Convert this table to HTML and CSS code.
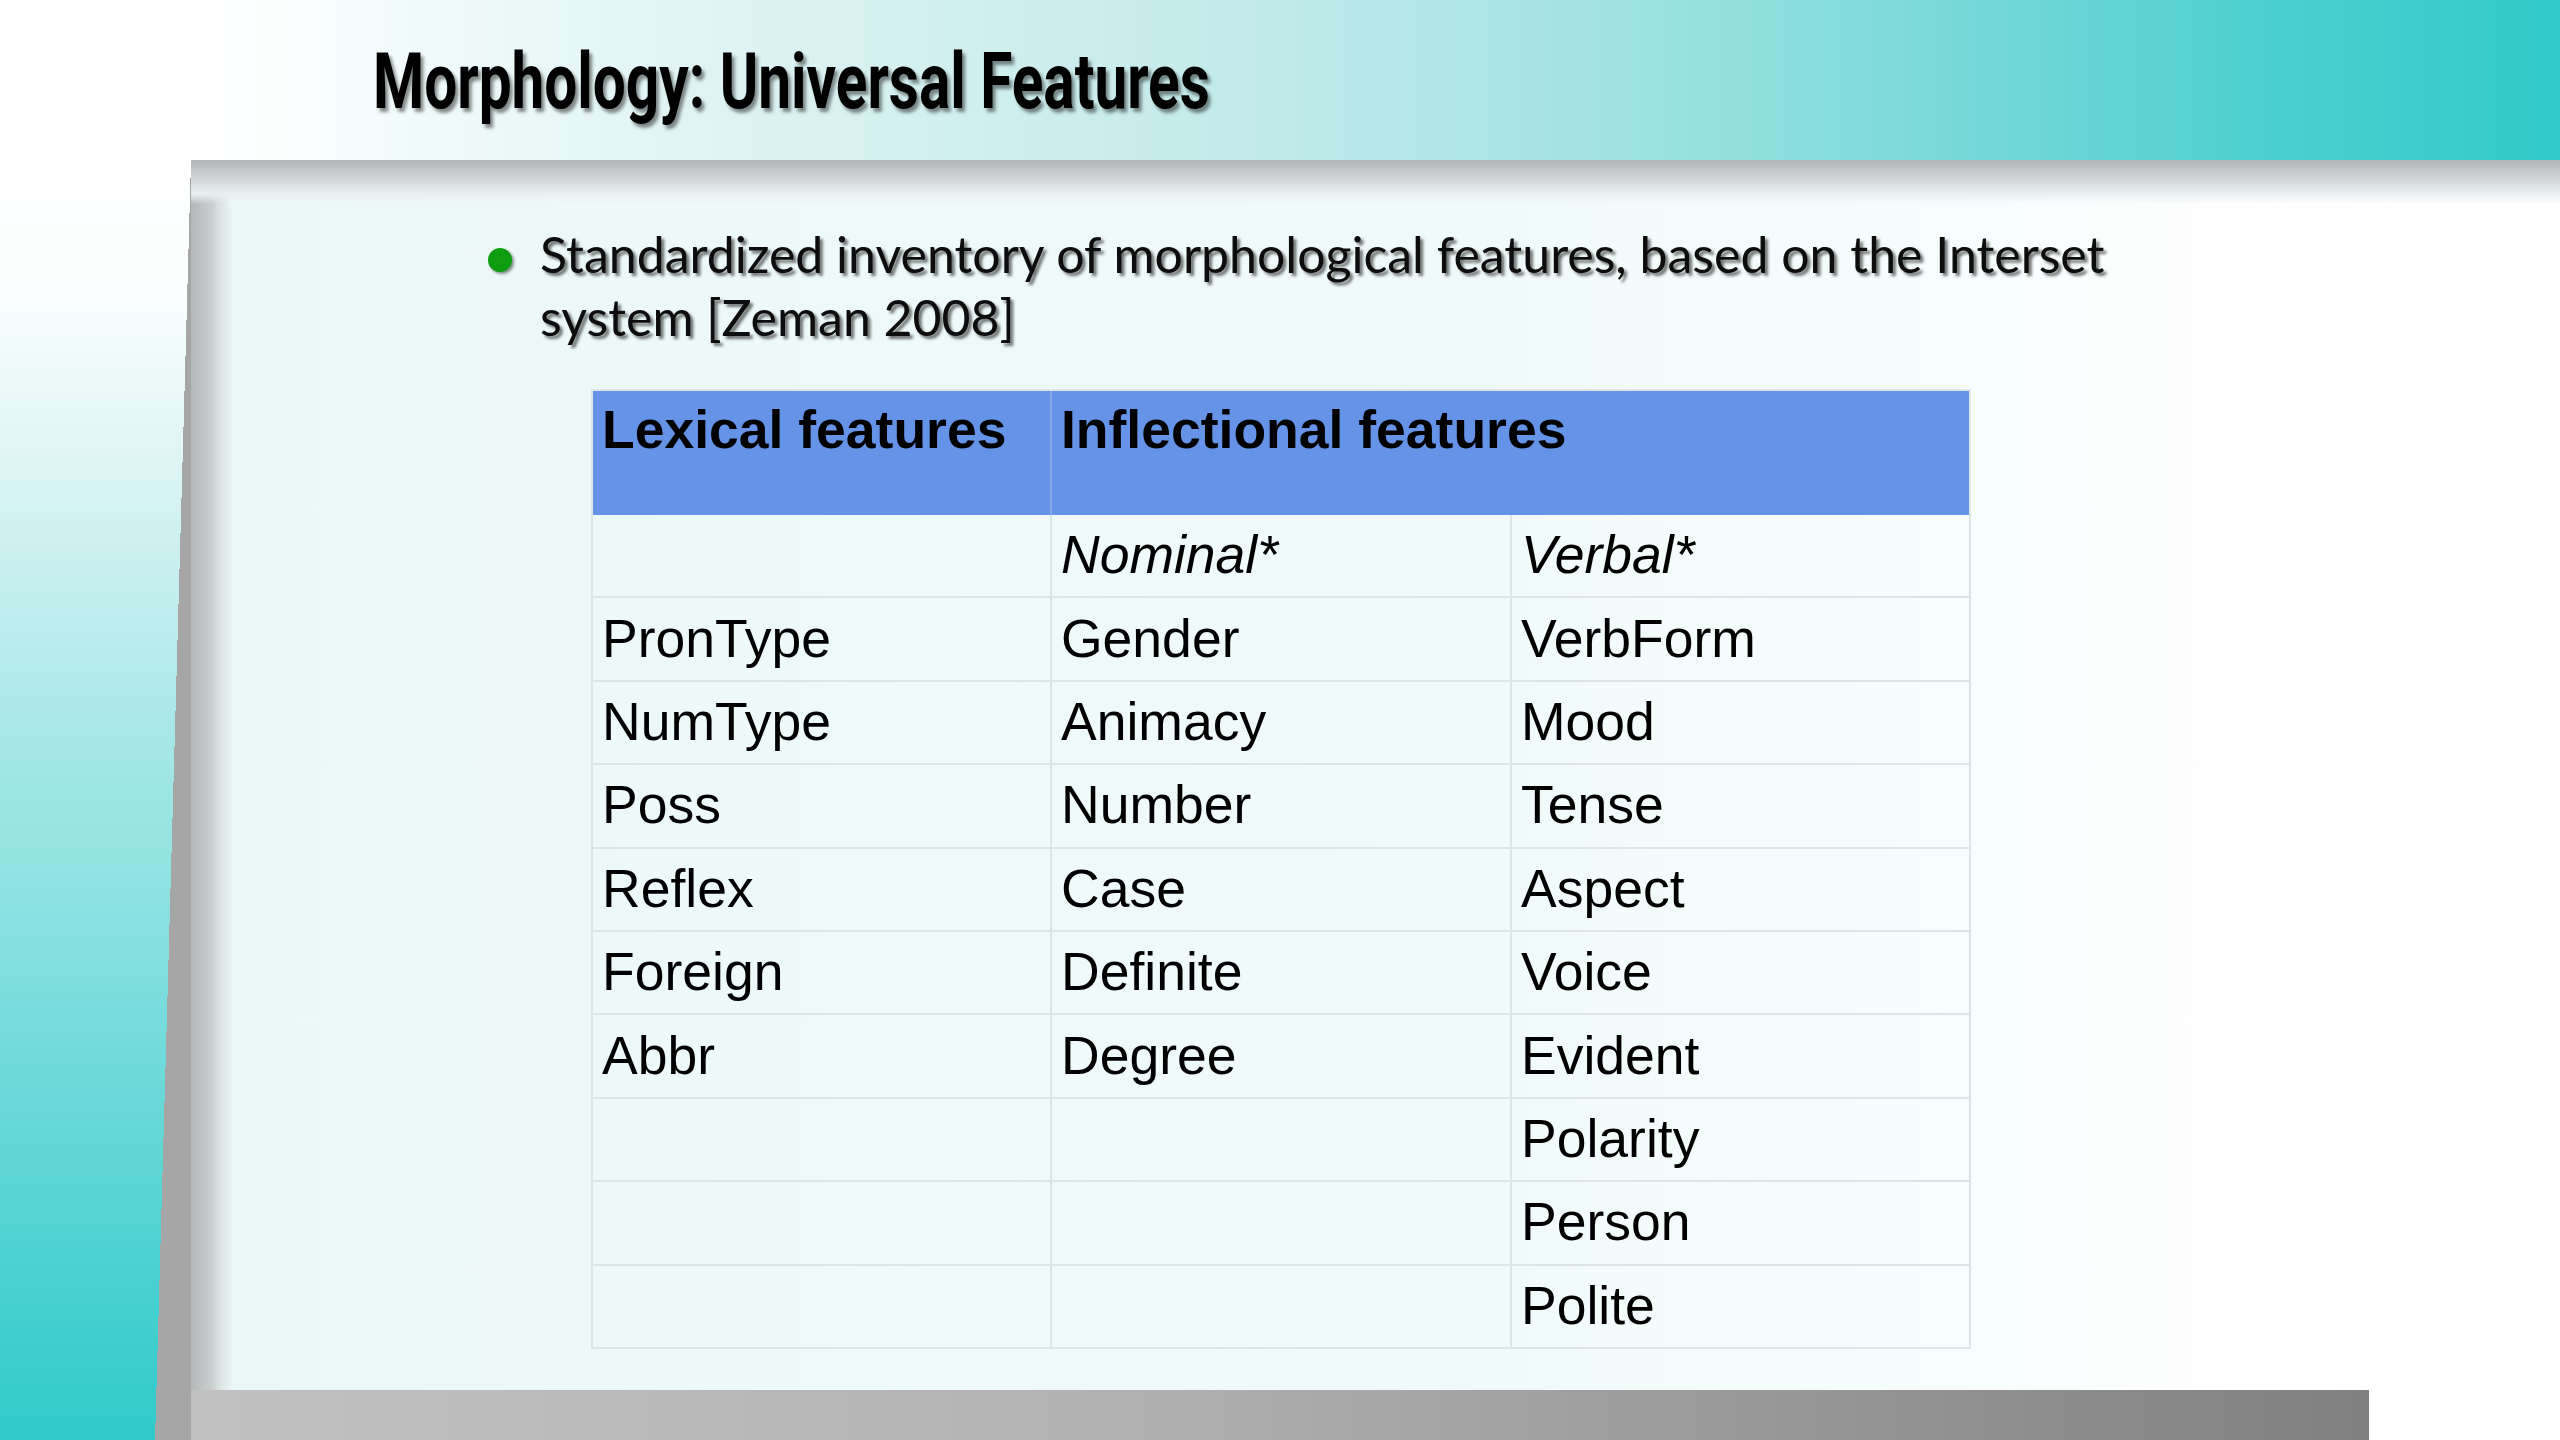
FILE: index.html
```html
<!DOCTYPE html>
<html lang="en">
<head>
<meta charset="utf-8">
<title>Morphology: Universal Features</title>
<link rel="stylesheet" href="styles.css">
</head>
<body>
<div class="slide">
  <header class="band">
    <h1 class="title">Morphology: Universal Features</h1>
  </header>
  <div class="side"><div class="slant"></div></div>
  <main class="panel">
    <div class="content">
      <div class="bullet">
        <span class="dot"></span>
        <p class="btext">Standardized inventory of morphological features, based on the Interset<br>system [Zeman 2008]</p>
      </div>
      <table class="feat">
        <colgroup><col class="c1"><col class="c2"><col class="c3"></colgroup>
        <thead>
          <tr class="hrow"><th>Lexical features</th><th colspan="2">Inflectional features</th></tr>
        </thead>
        <tbody>
          <tr class="sub"><td></td><td>Nominal*</td><td>Verbal*</td></tr>
          <tr><td>PronType</td><td>Gender</td><td>VerbForm</td></tr>
          <tr><td>NumType</td><td>Animacy</td><td>Mood</td></tr>
          <tr><td>Poss</td><td>Number</td><td>Tense</td></tr>
          <tr><td>Reflex</td><td>Case</td><td>Aspect</td></tr>
          <tr><td>Foreign</td><td>Definite</td><td>Voice</td></tr>
          <tr><td>Abbr</td><td>Degree</td><td>Evident</td></tr>
          <tr><td></td><td></td><td>Polarity</td></tr>
          <tr><td></td><td></td><td>Person</td></tr>
          <tr><td></td><td></td><td>Polite</td></tr>
        </tbody>
      </table>
    </div>
    <div class="foot"><div class="footbar"></div></div>
  </main>
</div>
</body>
</html>
```
FILE: styles.css
```css
html, body {
  margin: 0;
  padding: 0;
}
body {
  width: 2560px;
  height: 1440px;
  overflow: hidden;
  background: #ffffff;
}
.slide {
  width: 2560px;
  height: 1440px;
  display: grid;
  grid-template-columns: 191px 1fr;
  grid-template-rows: 160px 1fr;
}
.band {
  grid-column: 1 / -1;
  box-sizing: border-box;
  padding: 43px 0 0 373px;
  background: linear-gradient(90deg,
    #ffffff 0%, #fdfefe 10%, #f3fbfb 15%, #e3f5f5 25%,
    #c0e9e9 50%, #a0e2e2 63%, #7bd9d9 75.5%, #4ecfcf 88%, #30caca 100%);
}
.title {
  margin: 0;
  display: inline-block;
  white-space: nowrap;
  font-family: Roboto, "Liberation Sans", sans-serif;
  font-weight: 700;
  font-size: 78px;
  line-height: 77px;
  color: #000000;
  transform: scaleX(0.75);
  transform-origin: 0 0;
  text-shadow: 4px 4px 4px rgba(0, 0, 0, 0.45);
}
.side {
  display: flex;
  justify-content: flex-end;
  background: linear-gradient(180deg,
    #ffffff 0%, #fbfefe 10%, #e6f7f7 20%, #cdf0f0 30%, #a6e7e7 45%,
    #88e0e0 60%, #66d7d7 75%, #44cfcf 90%, #2fcaca 100%);
}
.slant {
  width: 36px;
  background: linear-gradient(to bottom right, rgba(166, 166, 166, 0) 50%, #a6a6a6 50%);
}
.panel {
  display: flex;
  flex-direction: column;
  background:
    linear-gradient(180deg, #b2b6b6 0px, #bec2c2 8px, #cdd1d1 16px, #dde2e2 26px, #eaf0f0 34px, rgba(240, 250, 250, 0) 44px) 0 0 / 100% 44px no-repeat,
    linear-gradient(90deg, #b5b8b8 0px, #bfc3c3 10px, #c8cdcd 20px, #d9e0e0 28px, #e4eded 36px, rgba(236, 249, 249, 0) 42px) 0 0 / 42px 100% no-repeat,
    linear-gradient(90deg, #ebf8f8 0%, #f1fafa 55%, #f7fdfd 75%, #fefefe 85%, #ffffff 100%);
}
.content {
  flex: 1;
  box-sizing: border-box;
  padding-top: 63px;
}
.bullet {
  display: flex;
  align-items: flex-start;
  margin-left: 297px;
}
.dot {
  flex: none;
  width: 24px;
  height: 24px;
  border-radius: 50%;
  background: #0e9d0e;
  margin-top: 25px;
  margin-right: 28px;
  box-shadow: 2px 2px 3px rgba(0, 0, 0, 0.45);
}
.btext {
  margin: 0;
  font-family: Lato, "Open Sans", sans-serif;
  font-size: 50px;
  line-height: 63px;
  color: #0d0d0d;
  text-shadow: 3px 3px 3px rgba(0, 0, 0, 0.55);
}
.feat {
  margin: 40px 0 0 400px;
  border-collapse: separate;
  border-spacing: 0;
  table-layout: fixed;
  width: 1378px;
  border-top: 2px solid #dde4e4;
  border-left: 2px solid #dde4e4;
  font-family: "Liberation Sans", Arial, sans-serif;
  font-size: 53.5px;
  color: #000000;
}
.c1 { width: 459px; }
.c2 { width: 460px; }
.c3 { width: 459px; }
.hrow { height: 124px; }
.feat th {
  background: #6593e8;
  text-align: left;
  vertical-align: top;
  font-weight: 700;
  padding: 8px 0 0 9px;
  border-right: 2px solid #86a8ee;
}
.feat th:last-child {
  border-right-color: #dde4e4;
}
.feat tbody tr { height: 83.4px; }
.feat td {
  padding: 0 0 2px 9px;
  vertical-align: middle;
  border-right: 2px solid #dde4e4;
  border-bottom: 2px solid #dde4e4;
  white-space: nowrap;
}
.sub td { font-style: italic; }
.foot {
  height: 50px;
  display: flex;
  background: #ffffff;
}
.footbar {
  width: 2178px;
  background: linear-gradient(90deg, #c1c1c1 0%, #b3b3b3 40%, #9a9a9a 70%, #808080 100%);
}
```
